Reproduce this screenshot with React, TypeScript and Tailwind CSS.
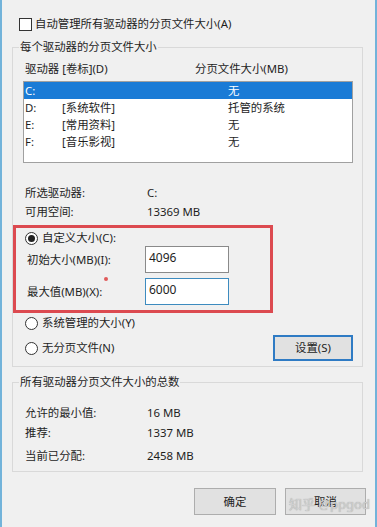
import React from "react";

const font = { fontFamily: '"Noto Sans", "Noto Sans CJK SC", sans-serif' };

function Radio({ checked }: { checked?: boolean }) {
  return (
    <span className="w-[13px] h-[13px] rounded-full border border-[#333] bg-white flex items-center justify-center shrink-0">
      {checked && <span className="w-[7px] h-[7px] rounded-full bg-[#222]" />}
    </span>
  );
}

function Row({ d, l, s, sel }: { d: string; l: string; s: string; sel?: boolean }) {
  return (
    <div className={`h-[17px] flex items-center pl-[1px] ${sel ? "bg-[#1a7bd6] text-white" : ""}`}>
      <span className="w-[37px]">{d}</span>
      <span className="w-[166px]">{l}</span>
      <span>{s}</span>
    </div>
  );
}

export default function App() {
  return (
    <div
      className="w-[377px] h-[527px] bg-[#f0f0f0] border-l-2 border-r-2 border-[#72b3da] relative overflow-hidden text-[11.4px] leading-[16px] text-[#1e1e1e]"
      style={font}
    >
      <div className="pl-[10px] pr-[12px] pt-[16px]">
        <div className="h-[16px] flex items-center ml-[7px] gap-[3px]">
          <span className="w-[13px] h-[13px] border border-[#333] bg-white shrink-0" />
          <span>自动管理所有驱动器的分页文件大小(A)</span>
        </div>

        <fieldset className="mt-[7px] border border-[#d9d9d9]">
          <legend className="ml-[6px] px-[1px]">每个驱动器的分页文件大小</legend>
          <div className="pl-[10px] pr-[9px] pt-[6px] pb-[5px]">
            <div className="h-[16px] flex items-center pl-[2px]">
              <span className="w-[170px]">驱动器 [卷标](D)</span>
              <span>分页文件大小(MB)</span>
            </div>
            <div className="mt-[4px] h-[82px] border border-[#a0a0a0] bg-white">
              <Row d="C:" l="" s="无" sel />
              <Row d="D:" l="[系统软件]" s="托管的系统" />
              <Row d="E:" l="[常用资料]" s="无" />
              <Row d="F:" l="[音乐影视]" s="无" />
            </div>

            <div className="mt-[22px] h-[16px] flex items-center pl-[2px]">
              <span className="w-[122px]">所选驱动器:</span>
              <span>C:</span>
            </div>
            <div className="mt-[3px] h-[16px] flex items-center pl-[2px]">
              <span className="w-[122px]">可用空间:</span>
              <span>13369 MB</span>
            </div>

            <div className="mt-[10px] h-[16px] flex items-center gap-[4px] ml-[2px]">
              <Radio checked />
              <span>自定义大小(C):</span>
            </div>
            <div className="h-[27px] flex items-center pl-[4px]">
              <span className="w-[118px]">初始大小(MB)(I):</span>
              <div className="w-[84px] h-[27px] border border-[#8a8a8a] bg-white pl-[3px] pt-[3px] text-[12px]">4096</div>
            </div>
            <div className="mt-[5px] h-[27px] flex items-center pl-[4px]">
              <span className="w-[118px]">最大值(MB)(X):</span>
              <div className="w-[84px] h-[27px] border border-[#3d8bbf] bg-white pl-[3px] pt-[3px] text-[12px]">6000</div>
            </div>

            <div className="mt-[10px] h-[16px] flex items-center gap-[4px] ml-[2px]">
              <Radio />
              <span>系统管理的大小(Y)</span>
            </div>
            <div className="mt-[4px] h-[26px] flex items-center justify-between">
              <div className="flex items-center gap-[4px] ml-[2px]">
                <Radio />
                <span>无分页文件(N)</span>
              </div>
              <div className="w-[80px] h-[26px] border-2 border-[#2f7bc4] bg-[#e1e1e1] flex items-center justify-center">
                设置(S)
              </div>
            </div>
          </div>
        </fieldset>

        <fieldset className="mt-[7px] border border-[#d9d9d9]">
          <legend className="ml-[6px] px-[1px]">所有驱动器分页文件大小的总数</legend>
          <div className="pl-[12px] pt-[15px] pb-[7px]">
            <div className="h-[16px] flex items-center">
              <span className="w-[122px]">允许的最小值:</span>
              <span>16 MB</span>
            </div>
            <div className="mt-[4px] h-[16px] flex items-center">
              <span className="w-[122px]">推荐:</span>
              <span>1337 MB</span>
            </div>
            <div className="mt-[7px] h-[16px] flex items-center">
              <span className="w-[122px]">当前已分配:</span>
              <span>2458 MB</span>
            </div>
          </div>
        </fieldset>

        <div className="mt-[16px] flex justify-end gap-[9px] mr-[-3px]">
          <div className="w-[82px] h-[27px] border border-[#adadad] bg-[#e1e1e1] flex items-center justify-center">确定</div>
          <div className="w-[81px] h-[27px] border border-[#adadad] bg-[#e1e1e1] flex items-center justify-center">
            取消
          </div>
        </div>
      </div>

      {/* red annotation box */}
      <div className="absolute left-[11px] top-[225px] w-[260px] h-[88px] border-[3px] border-[#dc4a50] pointer-events-none" />
      <div className="absolute left-[102px] top-[277px] w-[4px] h-[4px] rounded-full bg-[#e05a5a]" />

      {/* watermark */}
      <div
        className="absolute left-[287px] top-[495px] text-[13px] leading-[18px] text-[#cfcfcf] whitespace-nowrap pointer-events-none"
        style={{ textShadow: "0 0 1px #9a9a9a" }}
      >
        知乎 @ppgod
      </div>
    </div>
  );
}
